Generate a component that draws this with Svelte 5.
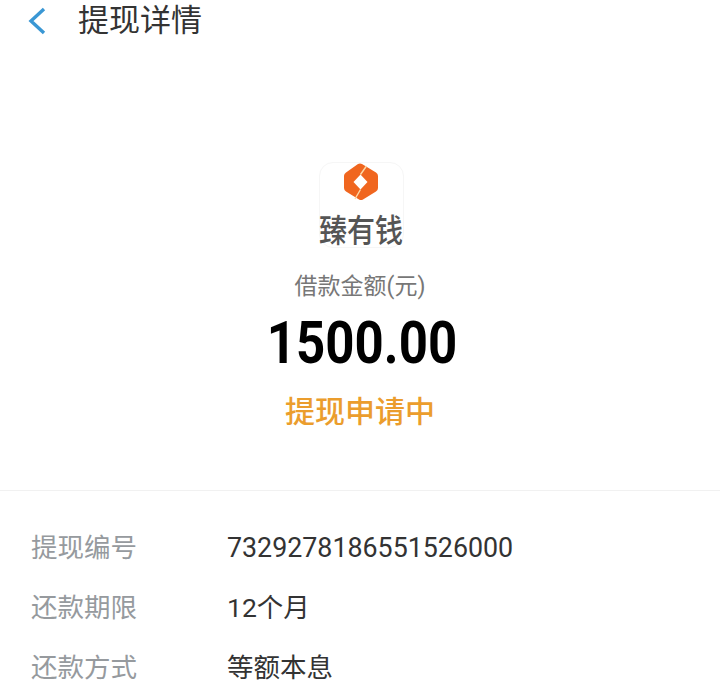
<script lang="ts">
	const rows = [
		{ label: '提现编号', value: '7329278186551526000' },
		{ label: '还款期限', value: '12个月' },
		{ label: '还款方式', value: '等额本息' }
	];
</script>

<div class="page">
	<header class="nav">
		<svg class="back" viewBox="0 0 20 30" width="20" height="30" fill="none" aria-hidden="true">
			<path d="M17 3 L4 15 L17 27" stroke="#3a97d4" stroke-width="3.4" />
		</svg>
		<h1>提现详情</h1>
	</header>

	<section class="summary">
		<div class="logo">
			<svg viewBox="0 0 36 38" width="36" height="38" aria-hidden="true">
				<path
					d="M15 1 Q17 0 19 1 L33 9.5 Q35 10.7 35 13 V25 Q35 27.3 33 28.5 L20 36.5 Q18 37.6 16 36.5 L3 28.5 Q1 27.3 1 25 V13 Q1 10.7 3 9.5 Z"
					fill="#f0661f"
				/>
				<path d="M17.5 11.5 L24.5 19 L17.5 26.5 L10.5 19 Z" fill="#fff" />
				<path d="M23.5 3 L17.5 11.5 M17.5 26.5 L12 36" stroke="#fbd9a8" stroke-width="1.4" />
			</svg>
			<span class="logo-name">臻有钱</span>
		</div>
		<p class="caption">借款金额(元)</p>
		<p class="amount">1500.00</p>
		<p class="status">提现申请中</p>
	</section>

	<dl class="details">
		{#each rows as row}
			<div class="row">
				<dt>{row.label}</dt>
				<dd>{row.value}</dd>
			</div>
		{/each}
	</dl>
</div>

<style>
	:global(body) {
		background: #fff;
	}

	.page {
		width: 720px;
		height: 690px;
		overflow: hidden;
		background: #fff;
		font-family: Roboto, "Noto Sans CJK SC", sans-serif;
	}

	.nav {
		display: flex;
		align-items: center;
		height: 42px;
		padding-left: 27px;
	}

	.back {
		margin-right: 31px;
	}

	h1 {
		margin: 0;
		font-size: 31px;
		line-height: 36px;
		font-weight: 400;
		color: #333;
	}

	.summary {
		display: flex;
		flex-direction: column;
		align-items: center;
		height: 449px;
		padding-top: 120px;
		box-sizing: border-box;
		border-bottom: 1px solid #f1f1f1;
	}

	.logo {
		display: flex;
		flex-direction: column;
		align-items: center;
		width: 85px;
		height: 86px;
		box-sizing: border-box;
		margin-left: 2px;
		border: 1px solid #f6f6f6;
		border-radius: 14px;
	}

	.logo-name {
		margin-top: 16px;
		font-size: 28px;
		line-height: 30px;
		font-weight: 500;
		color: #555;
		white-space: nowrap;
		transform: scaleY(1.15);
	}

	p {
		margin: 0;
	}

	.caption {
		margin-top: 24px;
		font-size: 23px;
		line-height: 30px;
		color: #777;
	}

	.amount {
		margin-top: 10px;
		margin-left: 3px;
		font-size: 60px;
		line-height: 62px;
		font-weight: 700;
		color: #000;
		transform: scaleX(0.85);
	}

	.status {
		margin-top: 17px;
		font-size: 30px;
		line-height: 42px;
		font-weight: 500;
		color: #eb9d2d;
	}

	.details {
		margin: 0;
		padding: 24px 0 0 31px;
	}

	.row {
		display: flex;
		align-items: center;
		height: 60px;
	}

	dt {
		width: 196px;
		font-size: 26.5px;
		color: #969a9e;
	}

	dd {
		margin: 0;
		font-size: 26.5px;
		color: #333;
	}

	.row:first-child dd {
		padding-top: 5px;
		font-size: 26.8px;
	}
</style>
